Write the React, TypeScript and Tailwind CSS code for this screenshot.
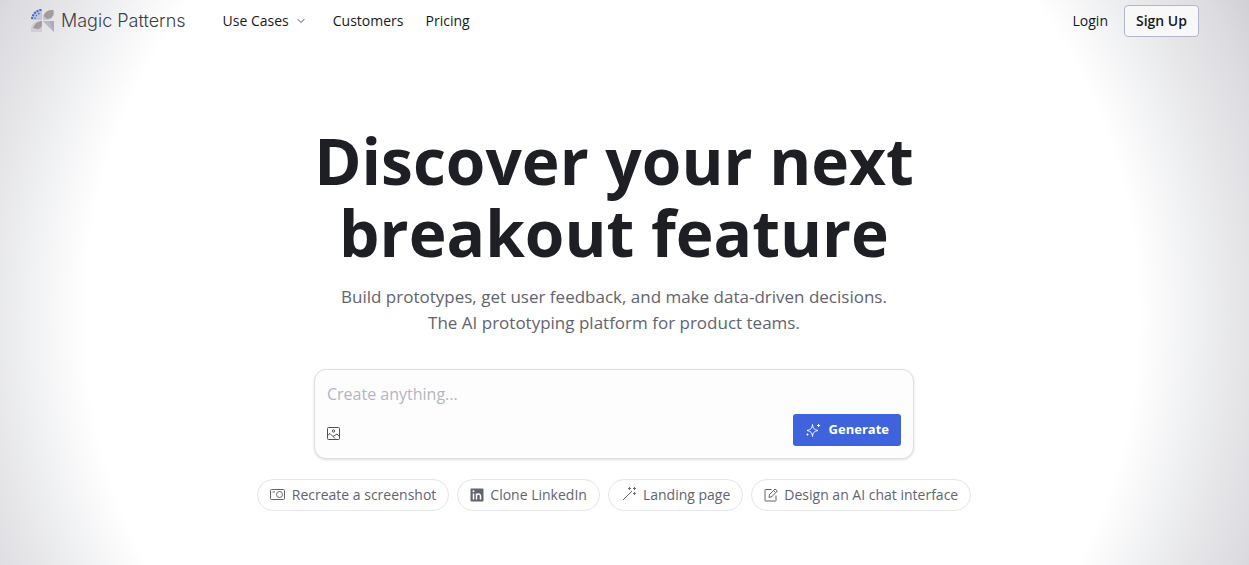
import type { ReactNode } from 'react'
import { ChevronDown } from 'lucide-react'

function LogoMark() {
  return (
    <svg viewBox="0 0 24 24" className="w-6 h-6" aria-hidden="true">
      <path d="M0 11A11 11 0 0 1 11 0V11Z" fill="#c3c6d4" />
      <path d="M1 10A10 10 0 0 1 11 1" fill="none" stroke="#3f63dd" strokeWidth="2" strokeDasharray="2 1" />
      <path d="M4 10A7 7 0 0 1 10 4" fill="none" stroke="#5b77d9" strokeWidth="1.5" strokeDasharray="1.5 1.5" />
      <path d="M12 11V9C12 4 16 1 20 1H23V4C23 8 20 11 16 11Z" fill="#c9c9ce" />
      <path d="M12.5 7C14 3 17 1 22 1C24 5 21 10 16 10Z" fill="#a39c9f" />
      <path d="M0 23V20C0 15 4 12 8 12H11V23Z" fill="#d0d0d4" />
      <path d="M2 19C4 14 7 12 11 12V15C11 18 9 20 6 20Z" fill="#a39c9f" />
      <path d="M12 12H23V23Z" fill="#a9acba" />
      <path d="M12 12L18 12L23 23Z" fill="#b9bac3" />
    </svg>
  )
}

function ImageIcon() {
  return (
    <svg viewBox="0 0 14 14" className="w-3.5 h-3.5" fill="none" stroke="#4b4f58" aria-hidden="true">
      <rect x="0.5" y="1.5" width="12" height="12" rx="1" />
      <circle cx="6.5" cy="5" r="1.2" />
      <path d="M0.5 9.5L3 7.5L8 12.5M6 10.5L10 8L12.5 10.5" />
    </svg>
  )
}

function SparkleIcon() {
  return (
    <svg viewBox="0 0 16 16" className="w-4 h-4" fill="none" stroke="currentColor" strokeLinejoin="round" aria-hidden="true">
      <path d="M7.5 2.5C8 6.5 9 7.5 13 8.5C9 9.5 8 10.5 7.5 14.5C7 10.5 6 9.5 2 8.5C6 7.5 7 6.5 7.5 2.5Z" />
      <path d="M13.5 2V5M12 3.5H15M2.5 11.5V13.5M1.5 12.5H3.5" />
    </svg>
  )
}

function CameraIcon() {
  return (
    <svg viewBox="0 0 16 16" className="w-4 h-4" fill="none" stroke="currentColor" aria-hidden="true">
      <rect x="0.5" y="2.5" width="14" height="10" rx="1" />
      <circle cx="9.5" cy="7.5" r="3" />
      <path d="M2.5 5H5" />
    </svg>
  )
}

function LinkedInIcon() {
  return (
    <svg viewBox="0 0 14 14" className="w-3.5 h-3.5" aria-hidden="true">
      <rect x="0.5" y="0.5" width="13" height="13" rx="1" fill="currentColor" />
      <path d="M3.5 5.5V11.5M6.5 11.5V5.5M6.5 8C6.5 5.5 10.5 5.2 10.5 8V11.5" fill="none" stroke="#fff" strokeWidth="1.5" />
      <circle cx="3.5" cy="3.2" r="1" fill="#fff" />
    </svg>
  )
}

function WandIcon() {
  return (
    <svg viewBox="0 0 16 16" className="w-4 h-4" fill="none" stroke="currentColor" aria-hidden="true">
      <path d="M2 13L11 4" />
      <path d="M8.5 0V3M7 1.5H10M13.5 0V3M12 1.5H15M13.5 5V8M12 6.5H15" strokeWidth="0.9" />
    </svg>
  )
}

function PencilIcon() {
  return (
    <svg viewBox="0 0 14 14" className="w-3.5 h-3.5" fill="none" stroke="currentColor" strokeLinejoin="round" aria-hidden="true">
      <path d="M7.5 1.5H1.5Q1 1.5 1 2V12.5Q1 13 1.5 13H11.5Q12 13 12 12.5V7.5" />
      <path d="M5 9.5L5.5 6.5L11 1L13.3 3L8 8.5ZM9.5 2.5L11.5 4.5" />
    </svg>
  )
}

const suggestions: { icon: ReactNode; label: string }[] = [
  { icon: <CameraIcon />, label: 'Recreate a screenshot' },
  { icon: <LinkedInIcon />, label: 'Clone LinkedIn' },
  { icon: <WandIcon />, label: 'Landing page' },
  { icon: <PencilIcon />, label: 'Design an AI chat interface' },
]

export default function App() {
  return (
    <div className="min-h-screen pr-[21px] font-['Open_Sans','Noto_Sans',sans-serif] bg-[radial-gradient(circle_farthest-corner_at_49%_56%,#fff_74%,#f8f8f9_78%,#f0f1f3_82%,#e6e6e9_88%,#dcdce0_95%,#d0d0d5_100%)]">
      {/* Navigation */}
      <header className="flex items-center justify-between pt-[5px] pl-[31px] pr-[29px] text-sm text-[#16181d]">
        <div className="flex items-center">
          <a href="#" className="flex items-center gap-1.5 mr-[37px] font-['Inter',sans-serif] text-lg font-light text-[#3d3f48]">
            <LogoMark />
            Magic Patterns
          </a>
          <nav className="flex items-center gap-[22px]">
            <button type="button" className="flex items-center gap-1.5">
              Use Cases
              <ChevronDown className="w-3 h-3 mr-1 text-[#4a4f66]" strokeWidth={2} />
            </button>
            <a href="#">Customers</a>
            <a href="#">Pricing</a>
          </nav>
        </div>
        <div className="flex items-center gap-4">
          <a href="#">Login</a>
          <button type="button" className="h-8 px-[11px] rounded-sm border border-[#b3b6ca] bg-[#f8f8f9] font-semibold">
            Sign Up
          </button>
        </div>
      </header>

      {/* Hero */}
      <main className="flex flex-col items-center pt-[88px] pb-10">
        <h1 className="text-center text-[64px] leading-[72px] font-bold text-[#1d1f25]">
          Discover your next
          <br />
          breakout feature
        </h1>
        <p className="mt-[15px] text-center text-[17px] leading-[26px] text-[#62646d]">
          Build prototypes, get user feedback, and make data-driven decisions.
          <br />
          The AI prototyping platform for product teams.
        </p>

        {/* Prompt box */}
        <form className="flex flex-col justify-between w-full max-w-[600px] mt-[33px] p-3 rounded-xl border border-[#dddee2] bg-[#fdfdfd] shadow-sm">
          <textarea
            aria-label="Prompt"
            rows={1}
            placeholder="Create anything..."
            className="h-8 resize-none outline-none text-base leading-6 text-[#1d1f25] placeholder:text-[#b3b5c4]"
          />
          <div className="flex items-center justify-between">
            <button type="button" aria-label="Attach image" className="pt-1.5">
              <ImageIcon />
            </button>
            <button type="submit" className="flex items-center gap-2 h-8 px-3 rounded-[3px] bg-[#3f63dd] text-[13px] font-bold text-white">
              <SparkleIcon />
              Generate
            </button>
          </div>
        </form>

        {/* Suggestions */}
        <div className="flex flex-wrap justify-center gap-2 mt-5">
          {suggestions.map((item) => (
            <button
              key={item.label}
              type="button"
              className="flex items-center gap-1.5 h-8 px-3 rounded-full border border-[#e5e6e9] bg-white text-sm text-[#62646d]"
            >
              {item.icon}
              {item.label}
            </button>
          ))}
        </div>
      </main>
    </div>
  )
}
